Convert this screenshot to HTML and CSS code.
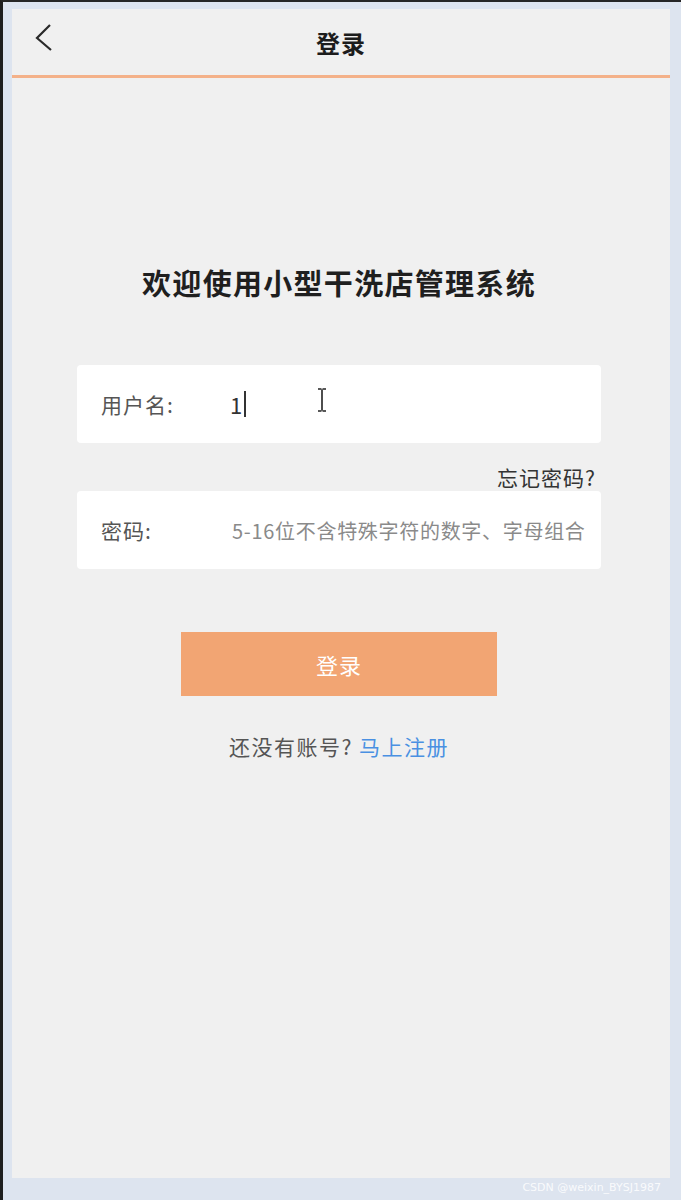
FILE: index.html
```html
<!DOCTYPE html>
<html lang="zh-CN">
<head>
<meta charset="utf-8">
<title>登录</title>
<link rel="stylesheet" href="styles.css">
</head>
<body>
<div class="screen">
  <div class="panel">
    <header class="topbar">
      <div class="back">
        <svg width="20" height="30" viewBox="0 0 20 30"><polyline points="16,1 3,14 17,26" fill="none" stroke="#2a2a2a" stroke-width="2.2" stroke-linejoin="miter"/></svg>
      </div>
      <h1 class="title">登录</h1>
      <div></div>
    </header>
    <main class="content">
      <h2 class="welcome">欢迎使用小型干洗店管理系统</h2>
      <div class="field">
        <span class="label">用户名:</span>
        <span class="value">1<span class="caret"></span></span>
        <svg class="ibeam" width="10" height="24" viewBox="0 0 10 24"><path d="M1 1h3.5M5.5 1H9M5 1.5v21M1 23h3.5M5.5 23H9" fill="none" stroke="#222" stroke-width="1.6"/></svg>
      </div>
      <div class="forgot">忘记密码?</div>
      <div class="field">
        <span class="label">密码:</span>
        <span class="placeholder">5-16位不含特殊字符的数字、字母组合</span>
      </div>
      <button class="login">登录</button>
      <p class="register">还没有账号? <a class="link">马上注册</a></p>
    </main>
  </div>
  <div class="watermark">CSDN @weixin_BYSJ1987</div>
</div>
</body>
</html>
```

FILE: styles.css
```css
* { box-sizing: border-box; }
html, body { margin: 0; padding: 0; }
body {
  background: #dde4ef;
  font-family: "Noto Sans CJK SC", "Noto Sans", sans-serif;
}
.screen {
  position: relative;
  width: 681px;
  height: 1200px;
  border-top: 2px solid #262626;
  border-left: 3px solid #1e1e1e;
  padding: 7px 0 0 9px;
  overflow: hidden;
}
.panel {
  width: 658px;
  height: 1169px;
  background: #f0f0f0;
  display: flex;
  flex-direction: column;
}
.topbar {
  display: grid;
  grid-template-columns: 80px 1fr 80px;
  align-items: start;
  height: 69px;
  border-bottom: 3px solid #f4b189;
}
.back {
  padding: 15px 0 0 22px;
  line-height: 0;
}
.title {
  margin: 18px 0 0;
  text-align: center;
  font-size: 24px;
  line-height: 32px;
  font-weight: 700;
  letter-spacing: 1px;
  color: #1c1c1c;
}
.content {
  display: flex;
  flex-direction: column;
  align-items: center;
  padding-right: 4px;
}
.welcome {
  margin: 184px 0 0;
  font-size: 29px;
  line-height: 40px;
  font-weight: 700;
  color: #1f1f1f;
  letter-spacing: 1.3px;
}
.field {
  position: relative;
  width: 524px;
  height: 78px;
  margin-top: 63px;
  background: #ffffff;
  border-radius: 4px;
  display: flex;
  align-items: center;
  padding-left: 24px;
}
.forgot + .field { margin-top: 1px; }
.label {
  width: 131px;
  color: #555555;
  font-size: 21px;
  letter-spacing: 1px;
}
.value {
  color: #333333;
  font-size: 22px;
  display: flex;
  align-items: center;
  margin-left: -2px;
}
.caret {
  display: inline-block;
  width: 2px;
  height: 26px;
  margin-left: 2px;
  background: #333;
}
.ibeam {
  position: absolute;
  left: 240px;
  top: 23px;
}
.placeholder {
  color: #8a8a8a;
  font-size: 20px;
  letter-spacing: 0.7px;
  white-space: nowrap;
}
.forgot {
  width: 524px;
  padding-right: 5px;
  margin-top: 21px;
  text-align: right;
  font-size: 21px;
  line-height: 26px;
  letter-spacing: 1px;
  color: #333333;
}
.login {
  width: 316px;
  height: 64px;
  margin-top: 63px;
  border: none;
  background: #f2a573;
  color: #ffffff;
  font-family: inherit;
  font-size: 22px;
  letter-spacing: 1px;
}
.register {
  margin: 36px 0 0;
  font-size: 21px;
  line-height: 28px;
  letter-spacing: 1.5px;
  color: #555555;
}
.link { color: #4a90e2; }
.watermark {
  position: absolute;
  right: 20px;
  bottom: 6px;
  font-family: "DejaVu Sans", sans-serif;
  font-size: 11px;
  color: #ffffff;
  opacity: 0.85;
}
```
